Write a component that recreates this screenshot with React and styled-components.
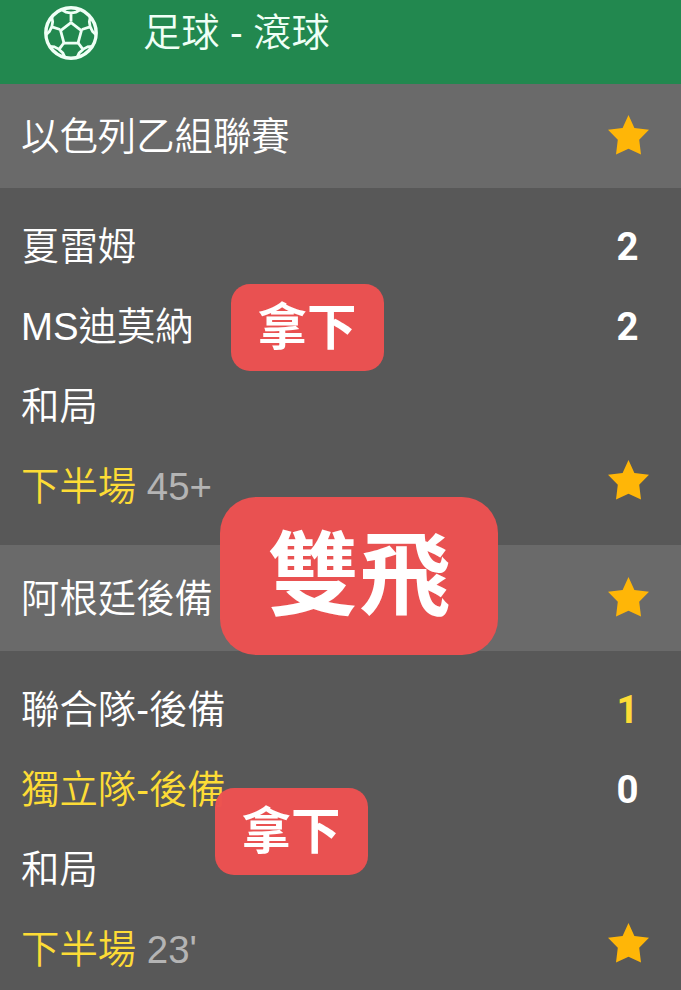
import styled, { createGlobalStyle } from "styled-components";

const matches = [
  {
    league: "以色列乙組聯賽",
    height: 104,
    home: { name: "夏雷姆", score: 2 },
    away: { name: "MS迪莫納", score: 2 },
    clock: "45+",
  },
  {
    league: "阿根廷後備",
    height: 106,
    home: { name: "聯合隊-後備", score: 1, scoreActive: true },
    away: { name: "獨立隊-後備", score: 0, active: true },
    clock: "23'",
  },
];

const FootballIcon = () => (
  <svg width="54" height="54" viewBox="-27 -27 54 54" fill="none" stroke="#effff6">
    <circle r="25.2" strokeWidth="3.4" />
    <path
      d="M0 -10.4 L10.4 -2.4 L7 10.2 L-7 10.2 L-10.4 -2.4 Z"
      strokeWidth="2.8"
      strokeLinejoin="round"
    />
    {[0, 72, 144, 216, 288].map((angle) => (
      <path
        key={angle}
        transform={`rotate(${angle})`}
        d="M0 -11.4 V-20 M-9.6 -23.4 L-5 -20.9 Q0 -19.4 5 -20.9 L9.6 -23.4"
        strokeWidth="2.8"
      />
    ))}
  </svg>
);

const StarIcon = () => (
  <svg width="42" height="42" viewBox="0 0 42 42" fill="#ffb607">
    <path d="M20.5 0 L26.4 13 L41 14.8 L31.2 24.8 L33 39.5 L20.5 33.8 L8 39.5 L9.8 24.8 L0 14.8 L14.6 13 Z" />
  </svg>
);

const Match = ({ league, height, home, away, clock }) => (
  <>
    <League $height={height}>
      <Label>{league}</Label>
      <StarIcon />
    </League>
    <Teams>
      {[home, away].map((team) => (
        <Row key={team.name}>
          <Label $active={team.active}>{team.name}</Label>
          <Score $active={team.scoreActive}>{team.score}</Score>
        </Row>
      ))}
      <Row>
        <Label>和局</Label>
      </Row>
      <StatusRow>
        <Label $active>
          下半場 <Clock>{clock}</Clock>
        </Label>
        <StarIcon />
      </StatusRow>
    </Teams>
  </>
);

const App = () => {
  return (
    <Wrapper>
      <GlobalStyle />
      <Header>
        <FootballIcon />
        <Title>足球 - 滾球</Title>
      </Header>

      {matches.map((el) => (
        <Match key={el.league} {...el} />
      ))}

      <Badge $x={231} $y={284}>拿下</Badge>
      <Badge $x={220} $y={497} $large>雙飛</Badge>
      <Badge $x={215} $y={788}>拿下</Badge>
    </Wrapper>
  );
};

const GlobalStyle = createGlobalStyle`
  * {
    box-sizing: border-box;
  }

  body {
    margin: 0;
    background: #585858;
  }
`;

const Wrapper = styled.div`
  position: relative;
  width: 681px;
  height: 990px;
  overflow: hidden;
  background: #585858;
  color: #fff;
  font-family: "Liberation Sans", "Noto Sans CJK TC", sans-serif;
  font-size: 38.4px;
  font-weight: 350;
  line-height: 48px;
`;

const Header = styled.header`
  display: flex;
  align-items: center;
  gap: 45px;
  height: 84px;
  padding: 0 44px 18px;
  background: #22884f;
`;

const Title = styled.span`
  color: #effff6;
  font-size: 38.2px;
  white-space: nowrap;
`;

const League = styled.div`
  display: flex;
  align-items: center;
  justify-content: space-between;
  height: ${({ $height }) => $height}px;
  padding: 0 31px 0 21px;
  background: #6a6a6a;
`;

const Teams = styled.div`
  display: flex;
  flex-direction: column;
  padding: 18px 31px 19px 21px;
`;

const Row = styled.div`
  display: flex;
  align-items: center;
  justify-content: space-between;
  height: 80px;
`;

const StatusRow = styled(Row)`
  svg {
    margin-bottom: 10px;
  }
`;

const Label = styled.span`
  padding-top: 1px;
  color: ${({ $active }) => ($active ? "#fddc36" : "#fff")};
  white-space: nowrap;
`;

const Clock = styled.span`
  color: #b4b4b4;
`;

const Score = styled.span`
  width: 45px;
  padding-top: 2px;
  color: ${({ $active }) => ($active ? "#fddc36" : "#fff")};
  font-family: Roboto, "Liberation Sans", sans-serif;
  font-weight: 700;
  text-align: center;
`;

const Badge = styled.div`
  position: absolute;
  left: ${({ $x }) => $x}px;
  top: ${({ $y }) => $y}px;
  display: flex;
  align-items: center;
  justify-content: center;
  width: ${({ $large }) => ($large ? 278 : 153)}px;
  height: ${({ $large }) => ($large ? 158 : 87)}px;
  padding-right: ${({ $large }) => ($large ? 0 : 1)}px;
  padding-top: ${({ $large }) => ($large ? 2 : 1)}px;
  border-radius: ${({ $large }) => ($large ? 36 : 19)}px;
  background: rgba(236, 81, 81, 0.98);
  font-size: ${({ $large }) => ($large ? 91.5 : 49.5)}px;
  font-weight: 700;
  line-height: 1;
`;

export default App;
